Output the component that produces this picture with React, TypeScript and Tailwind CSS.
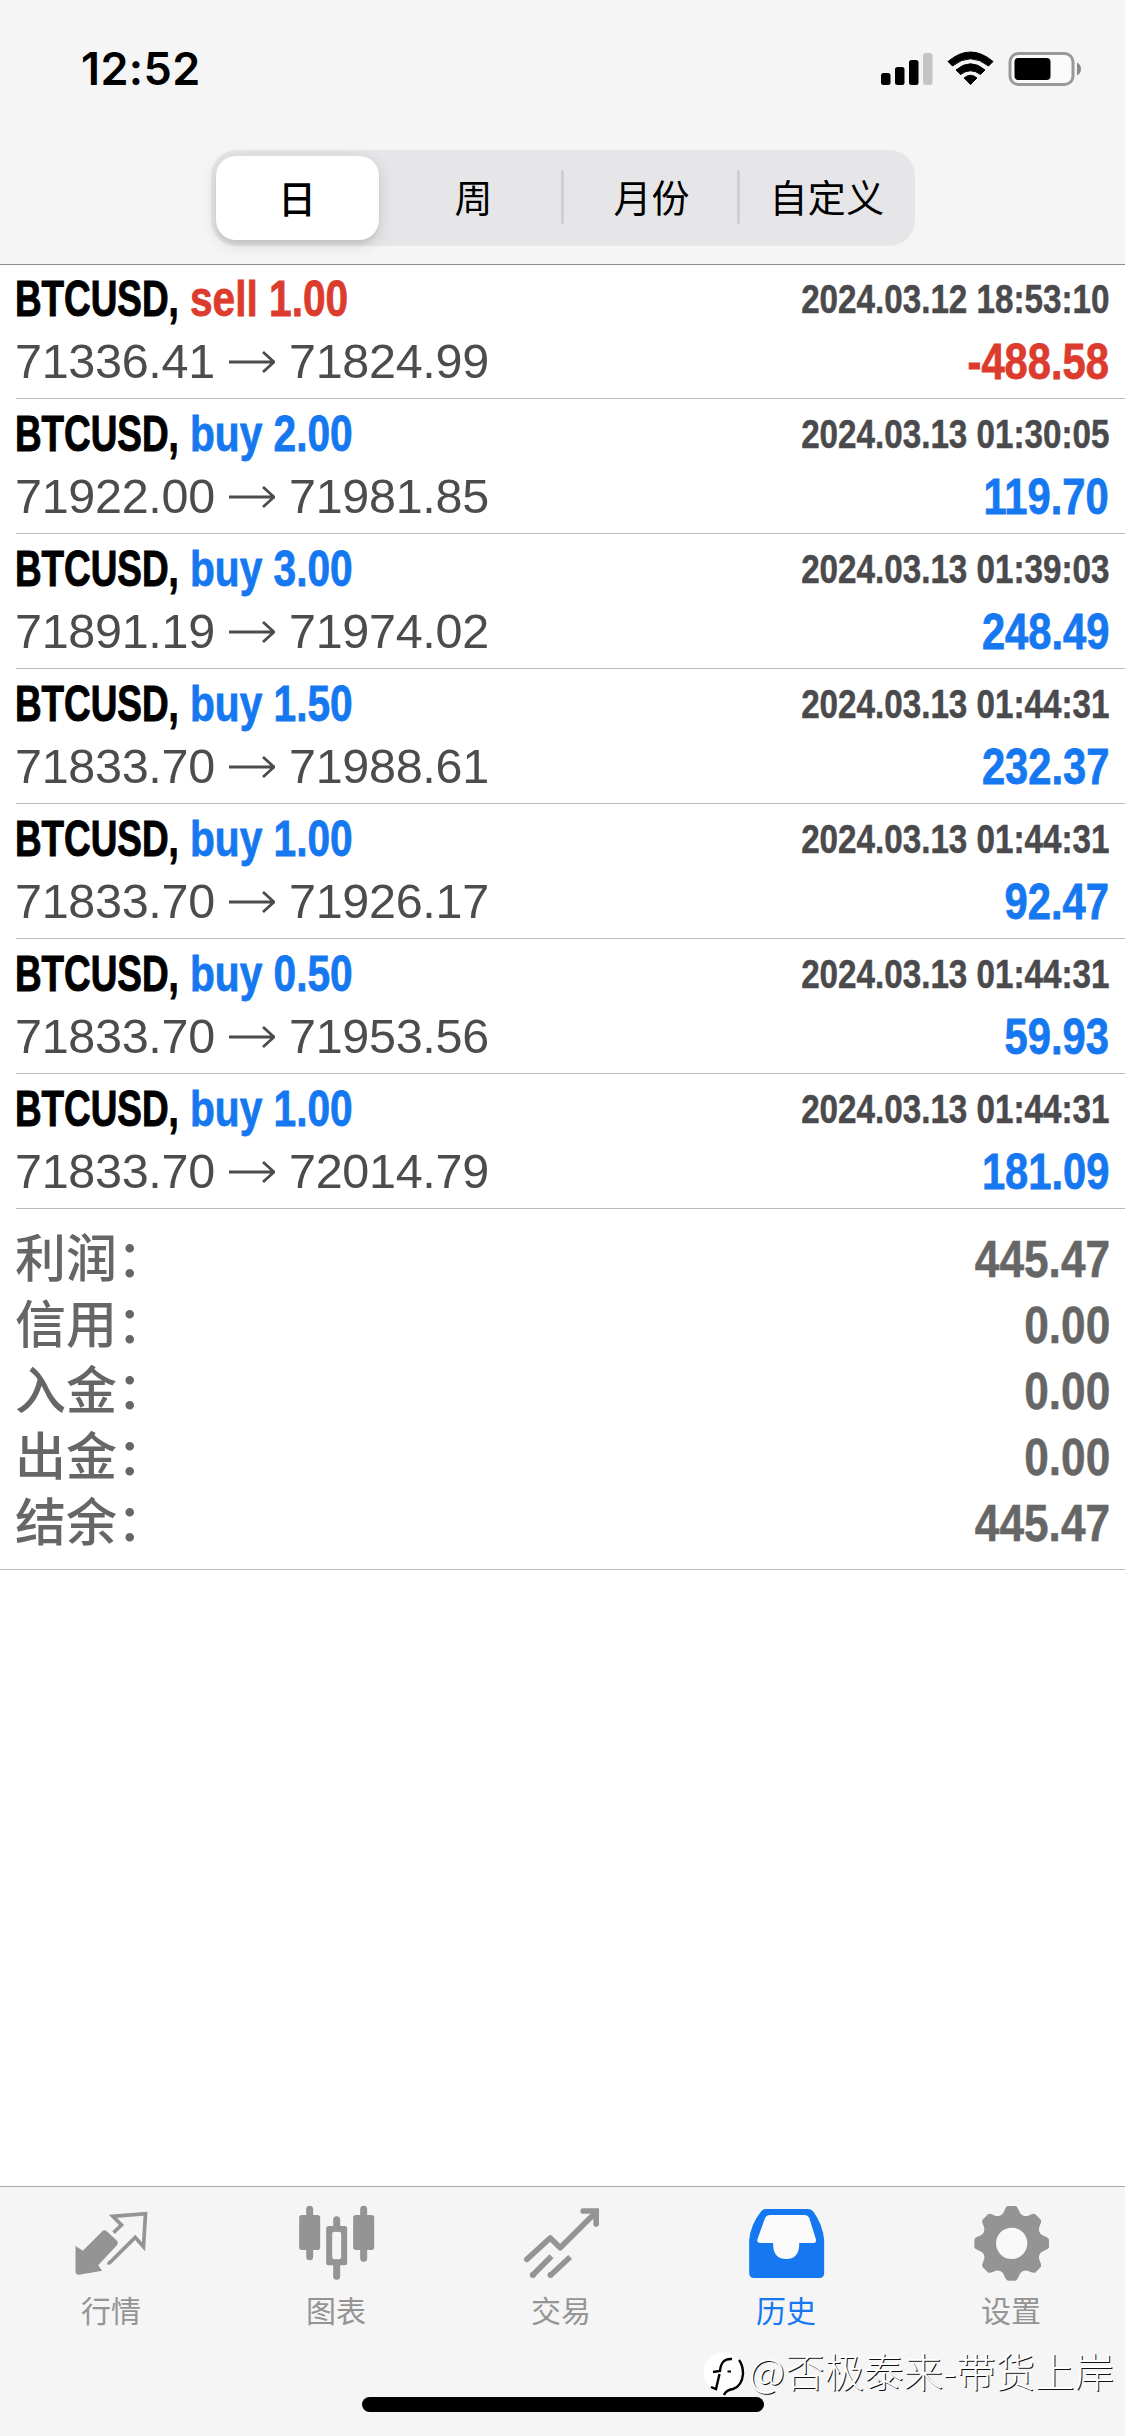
import type { ReactNode } from "react";

type Deal = { side: "buy" | "sell"; lots: string; from: string; to: string; time: string; profit: string };

const deals: Deal[] = [
  { side: "sell", lots: "1.00", from: "71336.41", to: "71824.99", time: "2024.03.12 18:53:10", profit: "-488.58" },
  { side: "buy", lots: "2.00", from: "71922.00", to: "71981.85", time: "2024.03.13 01:30:05", profit: "119.70" },
  { side: "buy", lots: "3.00", from: "71891.19", to: "71974.02", time: "2024.03.13 01:39:03", profit: "248.49" },
  { side: "buy", lots: "1.50", from: "71833.70", to: "71988.61", time: "2024.03.13 01:44:31", profit: "232.37" },
  { side: "buy", lots: "1.00", from: "71833.70", to: "71926.17", time: "2024.03.13 01:44:31", profit: "92.47" },
  { side: "buy", lots: "0.50", from: "71833.70", to: "71953.56", time: "2024.03.13 01:44:31", profit: "59.93" },
  { side: "buy", lots: "1.00", from: "71833.70", to: "72014.79", time: "2024.03.13 01:44:31", profit: "181.09" },
];

const totals = [
  ["利润", "445.47"],
  ["信用", "0.00"],
  ["入金", "0.00"],
  ["出金", "0.00"],
  ["结余", "445.47"],
];

function StatusBar() {
  return (
    <div className="flex h-[150px] items-start justify-between pl-[81px] pr-[44px]">
      <div className="mt-[40px] font-['Inter',sans-serif] text-[45px] leading-[58px] font-semibold tracking-[0.4px] text-black">
        12:52
      </div>
      <svg className="mt-[48px] h-[42px] w-[204px]" viewBox="877 48 204 42">
        <rect x="881" y="73" width="9.5" height="12" rx="2.5" />
        <rect x="895" y="67" width="9.5" height="18" rx="2.5" />
        <rect x="909" y="60" width="9.5" height="25" rx="2.5" />
        <rect x="923" y="53" width="9.5" height="32" rx="2.5" fill="#c4c4c4" />
        <path d="M948 61.5Q970.500 42.500 993 61.500L988.500 66Q970.500 51.500 952.500 66Z" stroke="#000" strokeWidth="1" strokeLinejoin="round" />
        <path d="M956 70Q970.500 57.500 985 70L980.500 74.500Q970.500 67 960.500 74.500Z" stroke="#000" strokeWidth="1" strokeLinejoin="round" />
        <path d="M964 78Q970.500 72.500 977 78L970.500 84.500Z" stroke="#000" strokeWidth="1" strokeLinejoin="round" />
        <rect x="1010" y="53.500" width="63" height="31" rx="8.500" fill="#fafafa" stroke="#999" strokeWidth="3" />
        <rect x="1014.500" y="58" width="36" height="22" rx="4" />
        <path d="M1077 62.500Q1081 64.500 1081 69T1077 75.500Z" fill="#888" />
      </svg>
    </div>
  );
}

function Segments() {
  return (
    <div className="mx-auto grid h-[96px] w-[704px] grid-cols-4 rounded-[26px] bg-[#e6e6e8] font-['Noto_Sans_CJK_SC',sans-serif] text-[38px] leading-none text-black">
      <div className="my-[6px] mr-[8px] ml-[5px] flex items-center justify-center rounded-[20px] bg-white pb-[2px] font-medium shadow-[0_4px_16px_rgba(0,0,0,0.14),0_4px_3px_rgba(0,0,0,0.05)]">
        日
      </div>
      <div className="flex items-center justify-center pr-[2px] pb-[4px]">周</div>
      <div className="relative flex items-center justify-center pb-[4px] before:absolute before:top-[20px] before:-left-[2px] before:h-[54px] before:w-[3px] before:rounded before:bg-[#cfcfd1]">
        <span className="pl-[2px]">月份</span>
      </div>
      <div className="relative flex items-center justify-center pb-[4px] before:absolute before:top-[20px] before:-left-[2px] before:h-[54px] before:w-[3px] before:rounded before:bg-[#cfcfd1]">
        <span className="pl-px tracking-[0.4px]">自定义</span>
      </div>
    </div>
  );
}

function DealRow({ deal }: { deal: Deal }) {
  const tone = deal.side === "sell" ? "text-[#dc3c2e]" : "text-[#1678f0]";
  return (
    <li className="ml-[16px] flex h-[135px] flex-col border-b border-[#b9b9bc] pr-[16px]">
      <div className="flex h-[66px] items-center pt-[3px] text-[50px] leading-none font-bold">
        <span className="-ml-px w-[175px] shrink-0 origin-left scale-x-[0.737] whitespace-nowrap text-black [-webkit-text-stroke:1px_currentColor]">
          BTCUSD,
        </span>
        <span
          className={`w-[200px] shrink-0 origin-left scale-x-[0.813] whitespace-nowrap [-webkit-text-stroke:0.8px_currentColor] ${tone}`}
        >
          {deal.side} {deal.lots}
        </span>
        <span className="ml-auto origin-right scale-x-[0.83] text-[40px] whitespace-nowrap text-[#4a4a4d] [-webkit-text-stroke:0.5px_currentColor]">
          {deal.time}
        </span>
      </div>
      <div className="flex h-[63px] items-center text-[48.500px] leading-none text-[#4c4c4e]">
        <span className="-ml-px w-[214px] tracking-[-0.3px]">{deal.from}</span>
        <svg className="mr-[14px] h-[24px] w-[46px]" viewBox="0 0 46 24" fill="none" stroke="currentColor" strokeWidth="2.8">
          <path d="M0 12H44M34 2L45 12L34 22" />
        </svg>
        <span className="tracking-[-0.3px]">{deal.to}</span>
        <span
          className={`ml-auto origin-right scale-x-[0.842] text-[49.500px] font-bold [-webkit-text-stroke:0.8px_currentColor] ${tone}`}
        >
          {deal.profit}
        </span>
      </div>
    </li>
  );
}

function Totals() {
  return (
    <dl className="h-[361px] border-b border-[#b9b9bc] pt-[16px] text-[#666]">
      {totals.map(([label, value]) => (
        <div key={label} className="flex h-[66px] items-center justify-between pr-[15px] pl-[15px]">
          <dt className="pb-[6px] font-['Noto_Sans_CJK_SC',sans-serif] text-[51px] leading-none font-medium">{label}：</dt>
          <dd className="origin-right scale-x-[0.85] pt-px text-[52px] leading-none font-bold [-webkit-text-stroke:0.5px_currentColor]">
            {value}
          </dd>
        </div>
      ))}
    </dl>
  );
}

function Tab({ label, active, viewBox, children }: { label: string; active?: boolean; viewBox: string; children: ReactNode }) {
  return (
    <div className={`flex flex-col items-center ${active ? "text-[#1678f0]" : "text-[#949494]"}`}>
      <svg className="mt-[13px] h-[84px] w-[80px]" viewBox={viewBox} fill="currentColor">
        {children}
      </svg>
      <div className="mt-[9px] mr-[3px] font-['Noto_Sans_CJK_SC',sans-serif] text-[30px] leading-[32px]">{label}</div>
    </div>
  );
}

const teeth = [0, 45, 90, 135, 180, 225, 270, 315];

function TabBar() {
  return (
    <nav className="relative h-[250px] border-t border-[#a8a8a8] bg-[#f5f5f5]">
      <div className="grid grid-cols-5">
        <Tab label="行情" viewBox="218.500 90 240 252">
          <path d="M226 228L248 242L305 185Q312 177 320 184L349 211Q357 219 349 227L294 286L306 302L237 314Q226 315 226 304Z" />
          <path d="M340 188L364 165L338 139L436 131L430 230L405 202L331 276Q326 280 322 278" fill="none" stroke="currentColor" strokeWidth="11" />
        </Tab>
        <Tab label="图表" viewBox="893.500 90 240 252">
          <rect x="897" y="135" width="63" height="105" rx="8" />
          <path d="M928.500 118V260M1009.500 149V175M1009.500 280V319M1090.500 118V265" stroke="currentColor" strokeWidth="21" strokeLinecap="round" />
          <rect x="1059" y="135" width="63" height="105" rx="8" />
          <path fillRule="evenodd" d="M985 168H1034Q1041 168 1041 175V279Q1041 286 1034 286H985Q978 286 978 279V175Q978 168 985 168ZM1003 185Q996 185 996 192V261Q996 268 1003 268H1016Q1023 268 1023 261V192Q1023 185 1016 185Z" />
        </Tab>
        <Tab label="交易" viewBox="308.500 90 240 252">
          <g fill="none" stroke="currentColor" strokeWidth="17">
            <path d="M320 268L390 204L420 233L528 126" strokeLinejoin="round" strokeLinecap="round" />
            <path d="M489 123H528V162" strokeLinecap="round" />
            <path d="M338 315L394 259M392 315L450 261" />
          </g>
          <circle cx="338" cy="315" r="9" />
          <circle cx="391" cy="315" r="9" />
        </Tab>
        <Tab label="历史" active viewBox="983.500 90 240 252">
          <path d="M1038 117H1164Q1174 117 1180 125Q1208 164 1212 210V309Q1212 324 1197 324H1002Q987 324 987 309V210Q991 164 1022 125Q1028 117 1038 117Z" />
          <path d="M1048 135H1154Q1163 135 1167 143L1187 207Q1190 219 1180 219H1137V229Q1134 267 1098 267T1059 229V219H1020Q1009 219 1012 207L1035 143Q1039 135 1048 135Z" fill="#fbfbfb" />
        </Tab>
        <Tab label="设置" viewBox="878.500 90 240 252">
          <circle cx="994.500" cy="220" r="89" />
          {teeth.map((angle) => (
            <path
              key={angle}
              transform={`rotate(${angle} 994.500 220)`}
              d="M955 139Q968 136 973 121Q978 108 984 108H1005Q1011 108 1016 121Q1021 136 1034 139L1020 170H969Z"
            />
          ))}
          <circle cx="994.500" cy="220" r="47" fill="#f8f8f8" />
        </Tab>
      </div>
      <div className="absolute bottom-[24px] left-[362px] h-[15px] w-[402px] rounded-full bg-black" />
      <div className="absolute top-[155px] left-[703px] flex items-center">
        <svg className="mt-[8px] h-[48px] w-[46px]" viewBox="0 0 46 48" fill="none">
          <circle cx="20" cy="22" r="19.500" fill="#fff" />
          <path d="M36 10Q40 15 40 24Q39 36 30 39Q23 40 21 45" stroke="#000" strokeWidth="2.400" />
          <path d="M29 9Q18 8 17 21L10 22M16.500 24L13 39L8 37" stroke="#000" strokeWidth="2.400" />
          <path d="M24.500 21.500H28" stroke="#000" strokeWidth="2" />
        </svg>
        <span className="font-['Noto_Sans_CJK_SC',sans-serif] text-[39.500px] leading-[48px] font-light whitespace-nowrap text-white [text-shadow:1px_1px_0_#111]">
          @否极泰来-带货上岸
        </span>
      </div>
    </nav>
  );
}

export default function App() {
  return (
    <div className="flex h-[2436px] w-[1125px] flex-col overflow-hidden bg-white font-['Liberation_Sans',Arial,sans-serif]">
      <header className="h-[265px] shrink-0 border-b border-[#8c8c8c] bg-[#f5f5f5]">
        <StatusBar />
        <Segments />
      </header>
      <main className="flex-1">
        <ul className="-mt-px">
          {deals.map((deal, i) => (
            <DealRow key={i} deal={deal} />
          ))}
        </ul>
        <Totals />
      </main>
      <TabBar />
    </div>
  );
}
